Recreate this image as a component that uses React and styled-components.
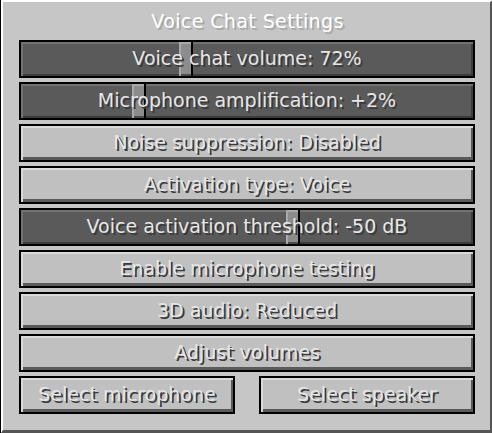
import React from 'react';
import styled, { createGlobalStyle } from 'styled-components';

const GlobalStyle = createGlobalStyle`
    html, body {
        margin: 0;
        padding: 0;
        background: #c6c6c6;
    }
`

const Panel = styled.div`
    box-sizing: border-box;
    width: 492px;
    height: 433px;
    background: #c6c6c6;
    border-style: solid;
    border-width: 2px 3px 3px 2px;
    border-color: #ffffff #555555 #555555 #ffffff;
    box-shadow: -1px 0 0 #000;
    margin-left: 1px;
    padding: 10px 14px 0 16px;
    display: flex;
    flex-direction: column;
    gap: 4px;
    font-family: "DejaVu Sans", sans-serif;
`

const Title = styled.div`
    height: 18px;
    line-height: 18px;
    margin-bottom: 6px;
    text-align: center;
    color: #ffffff;
    font-size: 19px;
    letter-spacing: 0.4px;
    text-shadow: 2px 2px 0 #a8a8a8;
`

const Label = styled.span`
    position: relative;
    z-index: 1;
    color: #e6e6e6;
    font-size: 19px;
    letter-spacing: 0;
    text-shadow: 2px 2px 0 #3a3a3a;
    white-space: nowrap;
`

const Button = styled.div`
    box-sizing: border-box;
    width: ${p => p.$width || "456px"};
    height: 38px;
    border: 2px solid #000;
    background: #c0c0c0;
    box-shadow: inset 2px 2px 0 #d9d9d9, inset -2px -3px 0 #5a5a5a;
    display: flex;
    align-items: center;
    justify-content: center;
    padding-bottom: 2px;
`

const Slider = styled(Button)`
    position: relative;
    background: #5a5a5a;
    box-shadow: inset 2px 2px 0 #727272, inset -2px -2px 0 #3c3c3c;
`

const Handle = styled.div`
    position: absolute;
    top: 0;
    bottom: 0;
    width: 12px;
    background: #8c8c8c;
    border-right: 2px solid #000;
    box-shadow: inset 2px 2px 0 #a9a9a9, inset 0 -2px 0 #4c4c4c;
`

const BottomRow = styled.div`
    display: flex;
    justify-content: space-between;
    width: 456px;
`

function SliderRow({ label, value }) {
    return (
        <Slider>
            <Handle style={{ left: `${value * 438}px` }} />
            <Label>{label}</Label>
        </Slider>
    )
}

export default function App() {
    return (
        <>
            <GlobalStyle />
            <Panel>
                <Title>Voice Chat Settings</Title>
                <SliderRow label="Voice chat volume: 72%" value={0.36} />
                <SliderRow label="Microphone amplification: +2%" value={0.253} />
                <Button><Label>Noise suppression: Disabled</Label></Button>
                <Button><Label>Activation type: Voice</Label></Button>
                <SliderRow label="Voice activation threshold: -50 dB" value={0.606} />
                <Button><Label>Enable microphone testing</Label></Button>
                <Button><Label>3D audio: Reduced</Label></Button>
                <Button><Label>Adjust volumes</Label></Button>
                <BottomRow>
                    <Button $width="216px"><Label>Select microphone</Label></Button>
                    <Button $width="216px"><Label>Select speaker</Label></Button>
                </BottomRow>
            </Panel>
        </>
    )
}
